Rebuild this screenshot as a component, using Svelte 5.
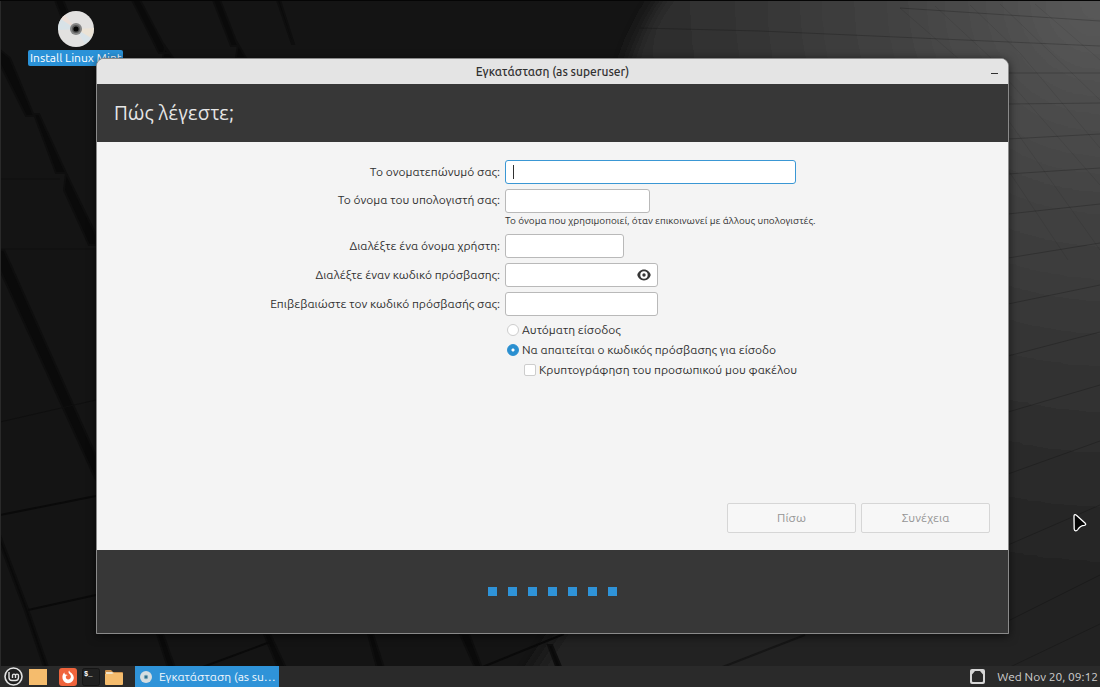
<script>
  let fullName = '';
  let computerName = '';
  let userName = '';
  let password = '';
  let confirmPassword = '';
  let loginMode = 'password';
  let encryptHome = false;
  let showPassword = false;

  const steps = [1, 2, 3, 4, 5, 6, 7];
  const windowTitle = 'Εγκατάσταση (as superuser)';

  // Leave the step only when every field has something in it
  $: canContinue = fullName && computerName && userName && password && password === confirmPassword;

  const togglePassword = () => {
    showPassword = !showPassword;
  };

  // The panel shortens long window titles
  const shorten = (title) => (title.length > 19 ? title.slice(0, 18) + '…' : title);
</script>

<div class="desktop">
  <svg class="wallpaper" viewBox="0 0 1100 687" preserveAspectRatio="none" aria-hidden="true">
    <defs>
      <radialGradient id="glow" gradientUnits="userSpaceOnUse" cx="1100" cy="0" r="620">
        <stop offset="0" stop-color="#5a5a5a" />
        <stop offset="0.3" stop-color="#444444" />
        <stop offset="0.65" stop-color="#303030" />
        <stop offset="1" stop-color="#202020" />
      </radialGradient>
      <filter id="soft" x="-10%" y="-10%" width="120%" height="120%">
        <feGaussianBlur stdDeviation="9" />
      </filter>
    </defs>
    <rect width="1100" height="687" fill="#141414" />
    <path d="M676 -20 Q639 22 626 70 L660 480 L500 720 H1130 V-20Z" fill="url(#glow)" filter="url(#soft)" />
    <g fill="#0a0a0a" stroke="#0e0e0e" stroke-width="2">
      <path d="M55 0h8l14 34h-9z" />
      <path d="M132 0h8l28 53h-9zM165 46l8 12h-10z" />
      <path d="M213 0h7l18 46h-7zM238 44l8 14h-10z" />
      <path d="M277 0h3l14 44h-2z" />
      <path d="M0 50l10 8 24 58h-8L0 64zM34 114h5l27 59h-10zM66 173l30 62v10h-7L64 190z" />
      <path d="M0 250l4 0 92 206v24L0 270z" />
      <path d="M0 535l28 74 20 58h-4L25 611 0 544z" />
      <path d="M157 634h6l12 34h-7zM264 634h6l16 34h-8zM368 634h5l11 34h-7zM460 634h9l13 34h-7zM548 645h4l10 24h-5z" />
    </g>
    <g stroke="#0a0a0a" stroke-width="2" fill="none">
      <path d="M0 515l96-19M28 610l68-15M200 668l70-26M480 668l84-34" />
      <path stroke-opacity="0.5" d="M720 668l85-33" />
    </g>
    <g stroke="#0f0f0f" stroke-width="1" fill="none">
      <path d="M0 422l96-22M0 179h60M0 249h96" />
    </g>
    <g stroke="#000" stroke-opacity="0.2" stroke-width="1" fill="none">
      <path d="M640 28l120 3 340 15M900 8l200 13M1008 73h92M1008 104l92-1M1008 139l92-5M1008 174l92-6M1008 214l92-10M1008 258l92-15M1008 304l92-19M1008 356l92-24M1008 412l92-27M1008 474l92-33" />
      <path d="M1008 545l92-40M1008 621l92-46M1008 668l92-44" />
      <path stroke-opacity="0.08" d="M900 8l60 52M935 6l56 52M970 5l50 48 80 95M1000 4l100 96M1035 4l65 56M1008 80l92 105M1008 120l92 130M1008 170l60 90" />
    </g>
    <rect width="1" height="687" fill="#2a2a2a" />
    <rect width="1100" height="1" fill="#050505" />
  </svg>

  <main class="workspace">
    <a class="launcher" href="#install">
      <svg width="38" height="38" viewBox="0 0 38 38" aria-hidden="true">
        <circle cx="19" cy="19" r="18" fill="#e2e1e0" />
        <path d="M19 19L1 20a18 18 0 0 1 3-11z" fill="#d8e2e7" />
        <path d="M19 19L4 9a18 18 0 0 1 4-4z" fill="#ecdfd8" />
        <path d="M19 19l18-1a18 18 0 0 1-3 10z" fill="#ebe3d6" />
        <path d="M19 19l15 9a18 18 0 0 1-6 6z" fill="#d9e3e8" />
        <circle cx="19" cy="19" r="6" fill="#858585" />
        <circle cx="19" cy="19" r="4" fill="#5a5a5a" />
        <circle cx="19" cy="19" r="2.6" fill="#050505" />
      </svg>
      <span>Install Linux Mint</span>
    </a>

    <section class="window" aria-labelledby="window-title">
      <header class="titlebar">
        <h1 id="window-title">{windowTitle}</h1>
        <button class="minimize" aria-label="Minimize"></button>
      </header>

      <h2 class="page-heading">Πώς λέγεστε;</h2>

      <form class="page" on:submit|preventDefault>
        <div class="fields">
          <label for="full-name">Το ονοματεπώνυμό σας:</label>
          <div class="entry full-name">
            <input id="full-name" class="active" type="text" bind:value={fullName} />
            {#if !fullName}<span class="caret"></span>{/if}
          </div>

          <label for="computer-name" class="top">Το όνομα του υπολογιστή σας:</label>
          <div>
            <div class="entry computer-name">
              <input id="computer-name" type="text" bind:value={computerName} />
            </div>
            <p class="hint">Το όνομα που χρησιμοποιεί, όταν επικοινωνεί με άλλους υπολογιστές.</p>
          </div>

          <label for="user-name">Διαλέξτε ένα όνομα χρήστη:</label>
          <div class="entry user-name">
            <input id="user-name" type="text" bind:value={userName} />
          </div>

          <label for="password">Διαλέξτε έναν κωδικό πρόσβασης:</label>
          <div class="entry password">
            <input
              id="password"
              type={showPassword ? 'text' : 'password'}
              value={password}
              on:input={(event) => (password = event.target.value)}
            />
            <button type="button" class="reveal" aria-label="Show password" on:click={togglePassword}>
              <svg width="14" height="12" viewBox="0 0 14 12">
                <path fill="#363636" fill-rule="evenodd" d="M7 .6C3.600.6.9 3.200.3 6c.6 2.800 3.300 5.400 6.700 5.400s6.100-2.600 6.700-5.400C13.100 3.200 10.400.6 7 .6zm0 1.700a3.700 3.700 0 1 1 0 7.400 3.700 3.700 0 0 1 0-7.400z" />
                <circle cx="7" cy="6" r="1.700" fill="#363636" />
              </svg>
            </button>
          </div>

          <label for="confirm-password">Επιβεβαιώστε τον κωδικό πρόσβασής σας:</label>
          <div class="entry password">
            <input id="confirm-password" type="password" bind:value={confirmPassword} />
          </div>

          <div class="options">
            <label>
              <input type="radio" value="auto" bind:group={loginMode} />
              Αυτόματη είσοδος
            </label>
            <label>
              <input type="radio" value="password" bind:group={loginMode} />
              Να απαιτείται ο κωδικός πρόσβασης για είσοδο
            </label>
            <label class="nested">
              <input type="checkbox" bind:checked={encryptHome} />
              Κρυπτογράφηση του προσωπικού μου φακέλου
            </label>
          </div>
        </div>

        <div class="actions">
          <button type="button" disabled>Πίσω</button>
          <button type="submit" disabled={!canContinue}>Συνέχεια</button>
        </div>
      </form>

      <footer class="steps">
        {#each steps as step (step)}
          <span class="step"></span>
        {/each}
      </footer>
    </section>

    <svg class="pointer" width="16" height="20" viewBox="0 0 16 20" aria-hidden="true">
      <path d="M2 3.200C2 1.500 3.400 1.300 4.400 2.300L13 10c1.200 1.200.8 2.200-.6 2.300-3 .1-4.600 1-6.600 4.200-1.200 1.800-3.400 1.800-3.600-.5z" fill="#050505" stroke="#fff" stroke-width="1.300" stroke-linejoin="round" />
    </svg>
  </main>

  <nav class="taskbar">
    <button class="menu" aria-label="Menu">
      <svg width="19" height="19" viewBox="0 0 19 19">
        <circle cx="9.500" cy="9.500" r="8.500" fill="#1f1f1f" stroke="#e4e4e4" stroke-width="1.600" />
        <path d="M5 5v5.500a3 3 0 0 0 3 3h3.500a3 3 0 0 0 3-3V8.600a1.500 1.500 0 0 0-3 0V11M11.500 8.600a1.500 1.500 0 0 0-3 0V11" fill="none" stroke="#e4e4e4" stroke-width="1.400" />
      </svg>
    </button>
    <button class="show-desktop" aria-label="Show desktop"></button>
    <div class="launchers">
      <button aria-label="Firefox">
        <svg width="18" height="18" viewBox="0 0 18 18">
          <rect width="18" height="18" rx="3" fill="#f0643c" />
          <path d="M9 15.200a5.800 5.800 0 0 1-5.600-6.400c.1-1.700.9-3.200 2-4.200 0 .9.300 1.500.8 1.900.9-.2 1.900 0 2.500.7-1.500.1-1.900.9-1.900 1.900 0 1.400 1.100 2.300 2.400 2.300 1.700 0 2.700-1.300 2.700-2.700 0-1.600-1.200-2.200-2-3.400-.6-.9-.5-2 .2-2.800.5 1.500 1.700 1.900 2.800 2.900a5.600 5.600 0 0 1 1.900 4.200c0 3.200-2.500 5.600-5.800 5.600z" fill="#fff" />
        </svg>
      </button>
      <button aria-label="Terminal">
        <svg width="18" height="18" viewBox="0 0 18 18">
          <rect x="0.500" y="0.500" width="17" height="17" rx="2" fill="#202020" stroke="#151515" />
          <text x="2" y="8" font-size="7" fill="#fff" font-family="Liberation Mono, monospace" font-weight="700">$_</text>
        </svg>
      </button>
      <button aria-label="Files">
        <svg width="18" height="18" viewBox="0 0 18 18">
          <path d="M0 3a1 1 0 0 1 1-1h5l2 2h9a1 1 0 0 1 1 1v5H0z" fill="#c98f4c" />
          <path d="M1 4h6l2 1h8v3H1z" fill="#f2e3c8" />
          <path d="M0 6h7l2-1h8a1 1 0 0 1 1 1v10a1 1 0 0 1-1 1H1a1 1 0 0 1-1-1z" fill="#f5bc6d" />
        </svg>
      </button>
    </div>
    <button class="task" title={windowTitle}>
      <svg width="14" height="14" viewBox="0 0 14 14" aria-hidden="true">
        <circle cx="7" cy="7" r="6" fill="#d5dde0" />
        <circle cx="7" cy="7" r="2.200" fill="#6fa0b4" />
        <circle cx="7" cy="7" r="1" fill="#1c5f80" />
      </svg>
      {shorten(windowTitle)}
    </button>
    <div class="tray">
      <button aria-label="Removable drives">
        <svg width="15" height="15" viewBox="0 0 15 15">
          <path fill="#d6d6d6" fill-rule="evenodd" d="M2 0h11a2 2 0 0 1 2 2v11a2 2 0 0 1-2 2H2a2 2 0 0 1-2-2V2a2 2 0 0 1 2-2zm3 2L2 5.500V12a1 1 0 0 0 1 1h9a1 1 0 0 0 1-1V5.500L10 2z" />
        </svg>
      </button>
      <time datetime="2024-11-20T09:12">Wed Nov 20, 09:12</time>
    </div>
  </nav>
</div>

<style>
  :global(body) {
    margin: 0;
    background: #141414;
  }

  .desktop {
    position: relative;
    display: flex;
    flex-direction: column;
    min-height: 100vh;
    overflow: hidden;
    font-family: Ubuntu, Roboto, 'Noto Sans', sans-serif;
    font-size: 12px;
    line-height: 16px;
    color: #303030;
  }

  button,
  input {
    font: inherit;
    box-sizing: border-box;
  }

  button {
    padding: 0;
    border: none;
    background: none;
  }

  svg {
    display: block;
  }

  .wallpaper {
    position: absolute;
    inset: 0;
    width: 100%;
    height: 100%;
  }

  .workspace {
    position: relative;
    flex: 1;
    display: flex;
  }

  /* Desktop icon */
  .launcher {
    position: absolute;
    left: 28px;
    top: 10px;
    display: flex;
    flex-direction: column;
    align-items: center;
    gap: 2px;
    color: #fff;
    text-decoration: none;
    white-space: nowrap;
  }

  .launcher span {
    padding: 0 2px;
    border-radius: 2px;
    background: #2a92d8;
  }

  /* Installer window */
  .window {
    position: relative;
    flex: 1;
    display: flex;
    flex-direction: column;
    margin: 58px 91px 32px 96px;
    border: 1px solid #8a8a8a;
    border-radius: 8px 8px 0 0;
    background: #f4f4f4;
    box-shadow: 0 2px 10px rgba(0, 0, 0, 0.6);
    overflow: hidden;
  }

  .titlebar {
    display: flex;
    align-items: center;
    height: 25px;
    padding: 0 8px 0 17px;
    background: #e4e4e4;
  }

  .titlebar h1 {
    flex: 1;
    margin: 0;
    font-size: 12px;
    font-weight: 500;
    text-align: center;
  }

  .minimize {
    display: flex;
    align-items: flex-end;
    width: 9px;
    height: 4px;
  }

  .minimize::before {
    content: '';
    width: 7px;
    height: 1px;
    background: #303030;
  }

  .page-heading {
    margin: 0;
    padding: 15px 17px;
    background: #373737;
    color: #e6e6e6;
    font-size: 20px;
    line-height: 28px;
    font-weight: 400;
  }

  .page {
    flex: 1;
    display: flex;
    flex-direction: column;
    justify-content: space-between;
    padding: 18px 18px 17px;
  }

  .fields {
    display: grid;
    grid-template-columns: 44% 1fr;
    gap: 5px;
    align-items: center;
  }

  .fields > label {
    text-align: right;
  }

  .fields > .top {
    align-self: start;
    line-height: 22px;
  }

  .entry {
    position: relative;
    display: flex;
  }

  .full-name {
    width: 291px;
  }

  .computer-name {
    width: 145px;
  }

  .user-name {
    width: 119px;
  }

  .password {
    width: 153px;
  }

  .entry input {
    width: 100%;
    height: 24px;
    padding: 0 7px;
    border: 1px solid #b9b9b9;
    border-radius: 3px;
    background: #fff;
    color: #303030;
    outline: none;
  }

  .entry input.active,
  .entry input:focus {
    border-color: #3a97d4;
  }

  .caret {
    position: absolute;
    left: 8px;
    top: 5px;
    width: 1px;
    height: 14px;
    background: #303030;
    pointer-events: none;
  }

  .reveal {
    position: absolute;
    right: 7px;
    top: 6px;
  }

  .hint {
    margin: 0;
    font-size: 10px;
    line-height: 16px;
  }

  .options {
    grid-column: 2;
    display: flex;
    flex-direction: column;
    gap: 2px;
  }

  .options label {
    display: flex;
    align-items: center;
    gap: 3px;
    height: 18px;
    padding-left: 2px;
  }

  .options .nested {
    padding-left: 19px;
  }

  .options input {
    appearance: none;
    width: 12px;
    height: 12px;
    margin: 0;
    border: 1px solid #cdcdcd;
    border-radius: 2px;
    background: #fff;
  }

  .options input[type='radio'] {
    border-radius: 50%;
  }

  .options input:checked {
    border-color: #2a8fd0;
    background: radial-gradient(circle, #fff 1px, #2a8fd0 2px);
  }

  .actions {
    display: flex;
    justify-content: flex-end;
    gap: 5px;
  }

  .actions button {
    width: 129px;
    height: 30px;
    border: 1px solid #d6d6d6;
    border-radius: 2px;
    background: #f7f7f7;
    color: #303030;
  }

  .actions button:disabled {
    color: #959595;
  }

  .steps {
    display: flex;
    justify-content: center;
    align-items: center;
    gap: 11px;
    height: 83px;
    background: #373737;
  }

  .step {
    width: 9px;
    height: 9px;
    background: #2f93d8;
  }

  .pointer {
    position: absolute;
    right: 12px;
    top: 513px;
  }

  /* Panel */
  .taskbar {
    position: relative;
    display: flex;
    align-items: center;
    height: 21px;
    padding: 0 2px 0 4px;
    background: #2a2a2a;
    color: #cfcfcf;
  }

  .show-desktop {
    width: 18px;
    height: 16px;
    margin: 0 12px 0 6px;
    background: #f5bc6d;
  }

  .launchers {
    display: flex;
    gap: 5px;
    margin-right: 12px;
  }

  .task {
    display: flex;
    align-items: center;
    gap: 6px;
    width: 144px;
    height: 21px;
    padding-left: 4px;
    background: #2f93d8;
    color: #f2f8fc;
    white-space: nowrap;
  }

  .tray {
    display: flex;
    align-items: center;
    gap: 12px;
    margin-left: auto;
  }
</style>
